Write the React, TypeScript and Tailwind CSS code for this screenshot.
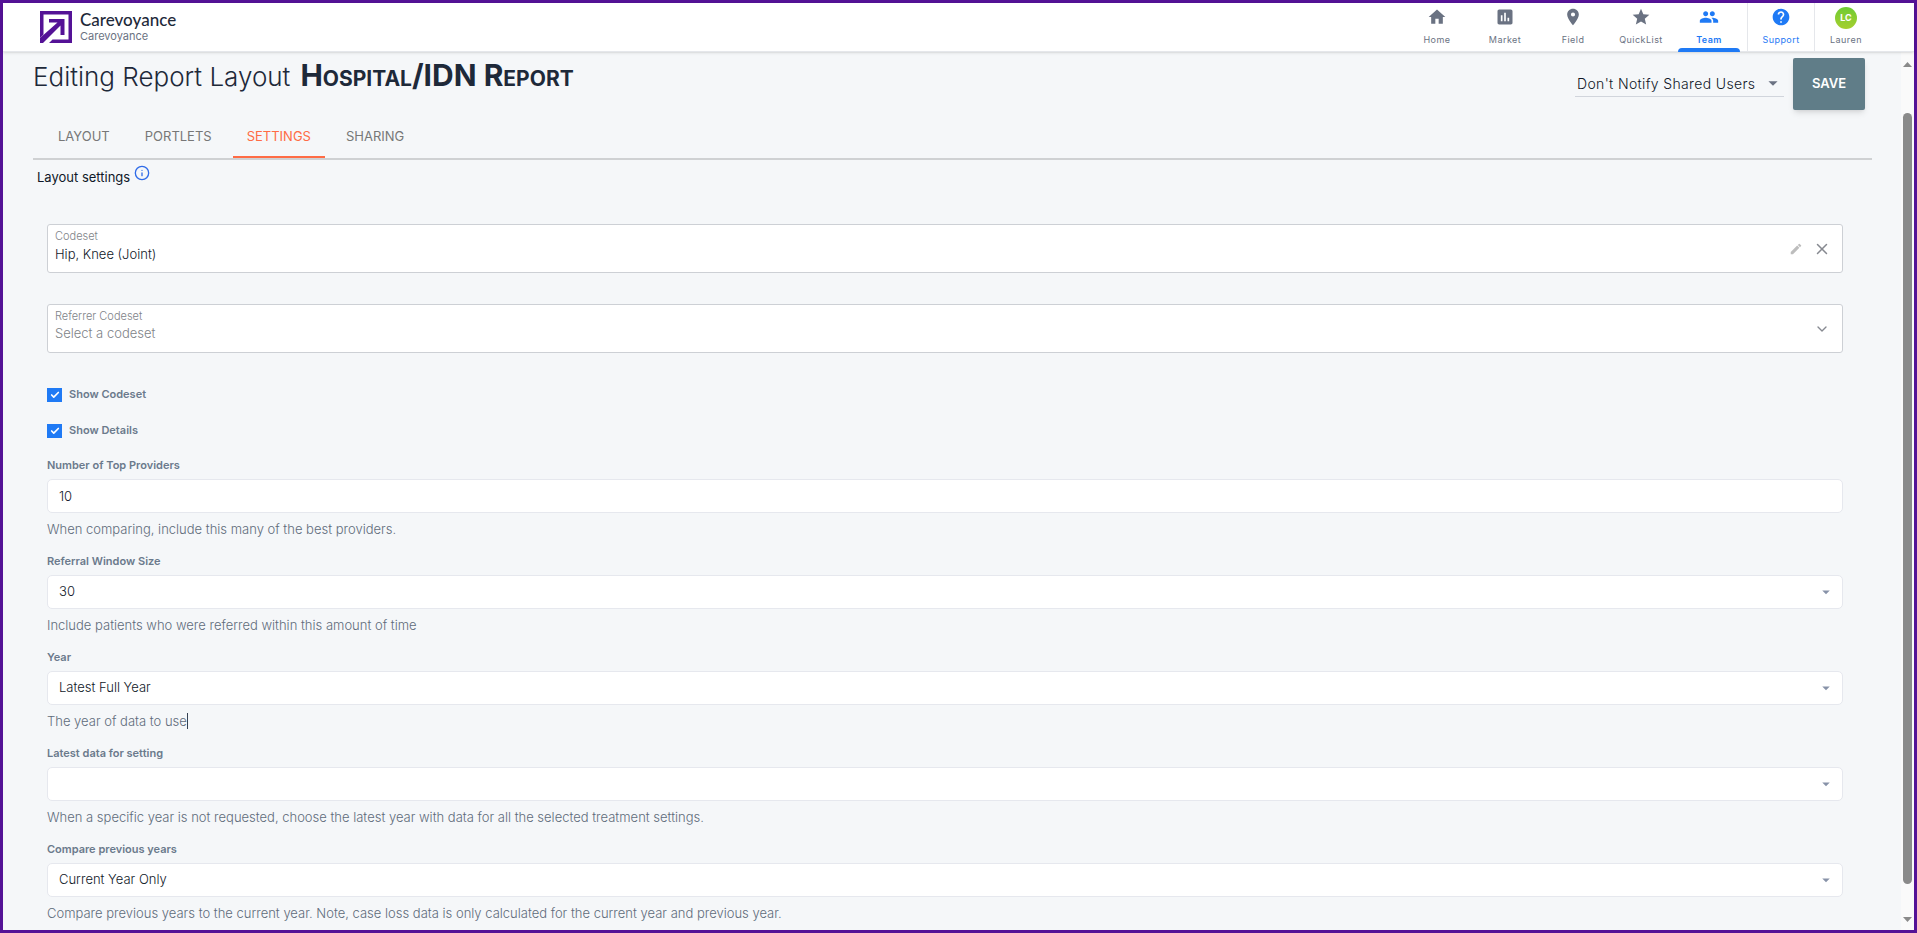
import { useState } from "react";
import type { ReactNode } from "react";
import { MdHome, MdAssessment, MdPlace, MdStar, MdPeople, MdHelp, MdArrowDropDown, MdEdit } from "react-icons/md";
import { Check, ChevronDown, Info, X } from "lucide-react";

const navItems = [
  { label: "Home", icon: MdHome },
  { label: "Market", icon: MdAssessment },
  { label: "Field", icon: MdPlace },
  { label: "QuickList", icon: MdStar },
  { label: "Team", icon: MdPeople, active: true },
];

const tabs = ["Layout", "Portlets", "Settings", "Sharing"];

const Logo = () => (
  <svg className="size-8" viewBox="0 0 32 32" fill="#541296">
    <path d="M0 0H32V32H9L12.500 28.500H28.500V3.500H3.500V23.500L0 27z" />
    <path d="M0 27L17.500 11.500H9V8H24.500V24H20.500V14.500L4 31L3 32H0z" />
  </svg>
);

const Header = () => (
  <header className="relative z-10 flex h-[49px] shrink-0 justify-between border-b border-gray-200 bg-white pl-[37px] pr-[37px] shadow-sm">
    <a href="#home" className="flex items-center gap-2">
      <Logo />
      <span className="flex flex-col pb-[2px]">
        <span className="font-[Lato] text-[17px] leading-5 font-medium text-gray-800">Carevoyance</span>
        <span className="text-[11px] leading-3 text-gray-500">Carevoyance</span>
      </span>
    </a>
    <nav className="flex">
      {navItems.map(({ label, icon: Icon, active }) => (
        <a
          key={label}
          href={"#" + label.toLowerCase()}
          className={
            "relative flex w-[68px] flex-col items-center gap-[7px] pt-1 text-[9px] leading-3 tracking-wider " +
            (active ? "font-semibold text-[#1f7af5]" : "text-gray-500")
          }
        >
          <Icon className="size-5" />
          {label}
          {active && <span className="absolute inset-x-[3px] -bottom-px h-1 rounded-t bg-[#1f7af5]" />}
        </a>
      ))}
      <a href="#support" className="ml-1 flex w-[67px] flex-col items-center gap-[7px] border-l border-gray-200 pt-1 text-[9px] leading-3 tracking-wider text-[#1f7af5]">
        <MdHelp className="size-5" />
        Support
      </a>
      <a href="#profile" className="flex w-[63px] flex-col items-center gap-[5px] border-l border-gray-200 pt-1 text-[9px] leading-3 tracking-wider text-gray-500">
        <span className="flex size-[22px] items-center justify-center rounded-full bg-linear-to-b from-[#6ccb33] to-[#a5cf2e] text-[9px] font-bold tracking-normal text-white">LC</span>
        Lauren
      </a>
    </nav>
  </header>
);

const Caret = () => <MdArrowDropDown className="pointer-events-none absolute right-2 top-2 size-[18px] text-[#8792a8]" />;

type FieldProps = { id: string; label: string; help: ReactNode; children: ReactNode };

const Field = ({ id, label, help, children }: FieldProps) => (
  <div className="h-24">
    <label className="block text-[11px] leading-4 font-semibold text-[#6b7a8c]" htmlFor={id}>{label}</label>
    <div className="relative mt-[6px]">{children}</div>
    <p className="mt-[6px] text-[13px] leading-5 font-light text-[#5f6c7b]">{help}</p>
  </div>
);

const fieldClass = "block h-[34px] w-full appearance-none rounded-[5px] border border-[#e6e8ee] bg-white px-[11px] text-[13px] font-light text-gray-900 outline-none";

const SelectField = ({ id, label, help, value }: { id: string; label: string; help: ReactNode; value: string }) => (
  <Field id={id} label={label} help={help}>
    <select id={id} className={fieldClass} defaultValue={value}>
      <option value={value}>{value}</option>
    </select>
    <Caret />
  </Field>
);

const CheckField = ({ id, label }: { id: string; label: string }) => {
  const [checked, setChecked] = useState(true);
  return (
    <div className="flex items-start gap-[7px]">
      <span className="relative block h-[14px] w-[15px]">
        <input
          id={id}
          type="checkbox"
          checked={checked}
          onChange={() => setChecked(!checked)}
          className="block h-[14px] w-[15px] appearance-none border border-[#1f7af5] checked:bg-[#1f7af5]"
        />
        {checked && <Check className="pointer-events-none absolute left-[3px] top-[2px] size-[10px] text-white" strokeWidth={4} />}
      </span>
      <label className="text-[11px] leading-[13px] font-semibold text-[#6b7a8c]" htmlFor={id}>{label}</label>
    </div>
  );
};

const Scrollbar = () => (
  <div className="flex w-[13px] shrink-0 flex-col items-center bg-[#fafafa] pb-2 pt-[10px]">
    <svg className="h-[5px] w-[9px]" viewBox="0 0 9 5"><path d="M4.500 0L9 5H0z" fill="#8a8a8a" /></svg>
    <div className="flex w-[9px] flex-1 flex-col pb-[33px] pt-[46px]">
      <div className="flex-1 rounded-full bg-[#8a8a8a]" />
    </div>
    <svg className="h-[5px] w-[9px]" viewBox="0 0 9 5"><path d="M0 0h9L4.500 5z" fill="#8a8a8a" /></svg>
  </div>
);

// Inter has no full small-caps set, so the lower case part is drawn as smaller capitals
const SmallCaps = ({ children }: { children: string }) => <span className="text-[21px] uppercase">{children}</span>;

const App = () => {
  const [tab, setTab] = useState("Settings");

  return (
    <div className="flex h-screen flex-col border-[3px] border-[#541296] bg-[#f5f7f9] font-[Inter,sans-serif]">
      <Header />
      <div className="flex min-h-0 flex-1">
        <main className="flex-1 overflow-y-auto pl-[30px] pr-[29px] [scrollbar-width:none]">
          <div className="flex h-[62px] items-start justify-between pr-[7px] pt-[6px]">
            <h1 className="flex items-baseline gap-[10px] text-[26px] leading-[34px] font-light text-gray-800">
              Editing Report Layout
              <strong className="text-[30px] font-bold">
                H<SmallCaps>ospital</SmallCaps>/IDN R<SmallCaps>eport</SmallCaps>
              </strong>
            </h1>
            <div className="flex items-start gap-[9px]">
              <div className="relative mt-3">
                <select aria-label="Notifications" className="h-[27px] w-[209px] appearance-none border-b border-gray-300 pl-[2px] text-[14px] font-light tracking-wide text-gray-900 outline-none">
                  <option>Don't Notify Shared Users</option>
                </select>
                <MdArrowDropDown className="pointer-events-none absolute right-0 top-[2px] size-[22px] text-gray-500" />
              </div>
              <button className="h-[52px] w-[72px] rounded-xs bg-[#607d88] text-[13px] font-semibold text-white shadow-md">SAVE</button>
            </div>
          </div>

          <div className="flex gap-[7px] border-b-2 border-[#cfd1d3] pl-[11px]" role="tablist">
            {tabs.map((name) => (
              <button
                key={name}
                role="tab"
                aria-selected={tab === name}
                onClick={() => setTab(name)}
                className={
                  "h-11 border-b-2 px-[14px] pt-1 text-[13px] uppercase " +
                  (tab === name ? "border-[#ff6c45] text-[#ff6c45]" : "border-transparent text-[#777777]")
                }
              >
                {name}
              </button>
            ))}
          </div>

          <h2 className="flex h-16 items-start gap-1 pl-1 pt-[5px] text-[13px] leading-6 text-gray-900">
            Layout settings
            <Info className="size-4 text-[#2f6be8]" />
          </h2>

          <form className="pl-[14px] pr-[29px]">
            <div className="flex h-[49px] items-center rounded-[3px] border border-[#cdd0d5] bg-white pl-[7px] pr-[11px]">
              <div className="flex flex-1 flex-col pb-[6px]">
                <label className="text-[11px] leading-4 font-light text-[#808388]" htmlFor="codeset">Codeset</label>
                <input id="codeset" className="h-5 w-full text-[13px] font-light text-gray-900 outline-none" defaultValue="Hip, Knee (Joint)" />
              </div>
              <button type="button" aria-label="Edit codeset" className="mr-[10px]"><MdEdit className="size-[14px] text-[#bdbdbd]" /></button>
              <button type="button" aria-label="Clear codeset"><X className="size-[18px] text-[#868990]" /></button>
            </div>

            <div className="relative mt-[31px] flex h-[49px] flex-col justify-center rounded-[3px] border border-[#cdd0d5] bg-white pb-[6px] pl-[7px] pr-3">
              <label className="text-[11px] leading-4 font-light text-[#808388]" htmlFor="referrer">Referrer Codeset</label>
              <select id="referrer" className="h-5 w-full appearance-none text-[13px] font-light text-[#808388] outline-none">
                <option>Select a codeset</option>
              </select>
              <ChevronDown className="pointer-events-none absolute right-3 top-4 size-4 text-[#868990]" />
            </div>

            <div className="mb-[19px] mt-[35px] flex flex-col gap-[22px]">
              <CheckField id="showCodeset" label="Show Codeset" />
              <CheckField id="showDetails" label="Show Details" />
            </div>

            <Field id="topProviders" label="Number of Top Providers" help="When comparing, include this many of the best providers.">
              <input id="topProviders" type="text" inputMode="numeric" className={fieldClass} defaultValue="10" />
            </Field>
            <SelectField id="window" label="Referral Window Size" value="30" help="Include patients who were referred within this amount of time" />
            <SelectField
              id="year"
              label="Year"
              value="Latest Full Year"
              help={<span className="border-r border-gray-700">The year of data to use</span>}
            />
            <SelectField id="latest" label="Latest data for setting" value="" help="When a specific year is not requested, choose the latest year with data for all the selected treatment settings." />
            <SelectField id="compare" label="Compare previous years" value="Current Year Only" help="Compare previous years to the current year. Note, case loss data is only calculated for the current year and previous year." />
          </form>
        </main>
        <Scrollbar />
      </div>
    </div>
  );
};

export default App;
